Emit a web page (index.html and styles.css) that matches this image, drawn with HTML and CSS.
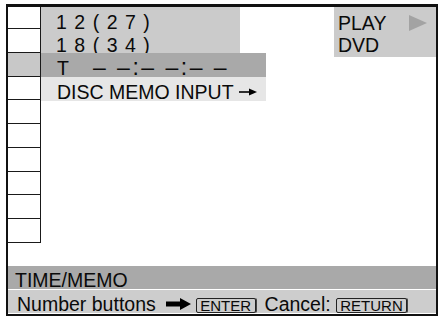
FILE: index.html
```html
<!DOCTYPE html>
<html>
<head>
<meta charset="utf-8">
<link rel="stylesheet" href="styles.css">
</head>
<body>
<div class="screen">
  <div class="top">
    <div class="tabs">
      <div class="cell first"></div>
      <div class="cell"></div>
      <div class="cell active"></div>
      <div class="cell"></div>
      <div class="cell"></div>
      <div class="cell"></div>
      <div class="cell"></div>
      <div class="cell"></div>
      <div class="cell"></div>
      <div class="cell"></div>
    </div>
    <div class="main">
      <div class="counts">
        <div class="line l1">12(27)</div>
        <div class="line l2">18(34)</div>
      </div>
      <div class="status">
        <div class="status-row"><span>PLAY</span><svg class="play" width="18" height="16" viewBox="0 0 18 16"><polygon points="0,0 18,8 0,16" fill="#a3a3a3"/></svg></div>
        <div>DVD</div>
      </div>
      <div class="row time">T<span class="dashes">– –:– –:– –</span></div>
      <div class="row memo">DISC MEMO INPUT<svg class="small-arrow" width="18" height="10" viewBox="0 0 18 10"><line x1="0" y1="5" x2="12" y2="5" stroke="#000" stroke-width="1.6"/><polygon points="10,1.5 18,5 10,8.5" fill="#000"/></svg></div>
    </div>
  </div>
  <div class="title-bar">TIME/MEMO</div>
  <div class="help-bar">
    <span>Number buttons</span>
    <svg class="big-arrow" width="25" height="12" viewBox="0 0 25 12"><polygon points="0,3.5 14,3.5 14,0 25,6 14,12 14,8.5 0,8.5" fill="#000"/></svg>
    <span class="key">ENTER</span>
    <span class="cancel">Cancel:</span>
    <span class="key">RETURN</span>
  </div>
</div>
</body>
</html>
```
FILE: styles.css
```css
html, body {
  margin: 0;
  padding: 0;
  background: #fff;
}
body {
  font-family: "Liberation Sans", Arial, sans-serif;
  font-size: 19.5px;
  color: #0a0a0a;
}
.screen {
  box-sizing: border-box;
  margin: 4px 0 0 6px;
  width: 432px;
  height: 312px;
  border: 2px solid #111;
  border-top-width: 3px;
  display: flex;
  flex-direction: column;
}
.top {
  height: 259px;
  display: flex;
}
.tabs {
  width: 33px;
  display: flex;
  flex-direction: column;
}
.cell {
  box-sizing: border-box;
  height: 23.78px;
  border-right: 1px solid #1a1a1a;
  border-bottom: 1px solid #1a1a1a;
}
.cell.first {
  height: 22px;
}
.cell.active {
  background: #c8c8c8;
}
.main {
  flex: 1;
  display: grid;
  grid-template-columns: 225px 1fr 102px;
  grid-template-rows: 46px 24px 24px;
  align-content: start;
}
.counts {
  grid-column: 1;
  grid-row: 1;
  width: 199px;
  background: #cbcbcb;
}
.line {
  box-sizing: border-box;
  padding-left: 15px;
  line-height: 17px;
  letter-spacing: 7.5px;
}
.l1 {
  height: 22px;
  padding-top: 6.5px;
}
.l2 {
  height: 24px;
  padding-top: 7.5px;
}
.status {
  grid-column: 3;
  grid-row: 1 / 3;
  align-self: start;
  box-sizing: border-box;
  height: 50px;
  background: #cbcbcb;
  padding: 5.4px 0 0 4px;
  line-height: 22px;
}
.status-row {
  display: flex;
  align-items: center;
  justify-content: space-between;
}
.play {
  margin-right: 9px;
  display: block;
}
.row {
  box-sizing: border-box;
  padding-left: 16px;
  line-height: 17px;
}
.time {
  grid-column: 1;
  grid-row: 2;
  background: #a9a9a9;
  padding-top: 6px;
}
.dashes {
  margin-left: 24px;
  font-size: 23px;
  letter-spacing: 2.5px;
}
.memo {
  grid-column: 1;
  grid-row: 3;
  background: #e6e6e6;
  padding-top: 7.4px;
}
.small-arrow {
  margin-left: 5px;
  vertical-align: 2px;
}
.title-bar {
  box-sizing: border-box;
  height: 23px;
  background: #a9a9a9;
  padding: 4px 0 0 7px;
  line-height: 20px;
}
.help-bar {
  box-sizing: border-box;
  height: 24px;
  border-top: 1px solid #fff;
  background: #cdcdcd;
  padding: 4px 0 0 9px;
  line-height: 20px;
  display: flex;
  align-items: flex-start;
  white-space: nowrap;
}
.big-arrow {
  margin: 4px 0 0 10px;
  display: block;
}
.key {
  margin-top: 4px;
  margin-left: 5px;
  font-size: 15px;
  line-height: 13px;
  border: 1px solid #222;
  border-radius: 2px;
  padding: 0 3.5px;
  box-shadow: 1px 0 0 #444;
}
.cancel {
  margin-left: 9px;
}
```
